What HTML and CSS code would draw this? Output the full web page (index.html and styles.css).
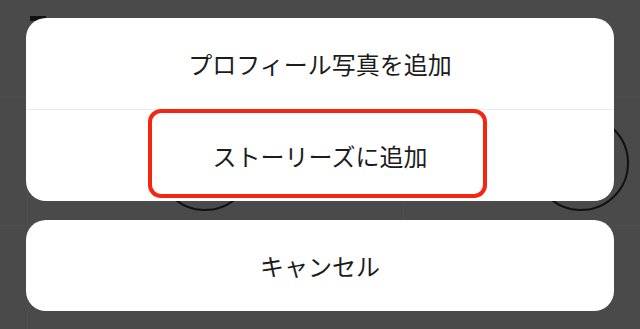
FILE: index.html
```html
<!DOCTYPE html>
<html lang="ja">
<head>
<meta charset="utf-8">
<title>Action sheet</title>
<link rel="stylesheet" href="styles.css">
</head>
<body>
<div class="backdrop" aria-hidden="true">
  <div class="bd-title-mark"></div>
  <div class="bd-title">投稿をシェア</div>
  <div class="bd-line bd-h1"></div>
  <div class="bd-line bd-h2"></div>
  <div class="bd-line bd-v1"></div>
  <div class="bd-line bd-v2"></div>
  <div class="bd-avatar bd-a1"></div>
  <div class="bd-avatar bd-a2"></div>
</div>
<main class="sheet">
  <section class="group">
    <button class="action">プロフィール写真を追加</button>
    <div class="divider"></div>
    <button class="action action-marked">ストーリーズに追加<span class="highlight"></span></button>
  </section>
  <section class="group">
    <button class="action">キャンセル</button>
  </section>
</main>
</body>
</html>
```

FILE: styles.css
```css
* { box-sizing: border-box; }
html, body {
  margin: 0;
  padding: 0;
  width: 640px;
  height: 329px;
  overflow: hidden;
}
body {
  background: #4a4a4a;
  font-family: "Noto Sans CJK JP", "Noto Sans", sans-serif;
  position: relative;
}
.backdrop {
  position: absolute;
  inset: 0;
}
.bd-title-mark {
  position: absolute;
  left: 30px;
  top: 16px;
  width: 16px;
  height: 5px;
  background: #111;
}
.bd-title {
  position: absolute;
  left: 172px;
  top: 13px;
  font-size: 22px;
  color: #222;
  line-height: 30px;
}
.bd-line {
  position: absolute;
  background: #4f4f4f;
}
.bd-h1 { left: 0; right: 0; top: 96px; height: 1px; }
.bd-h2 { left: 0; right: 0; top: 225px; height: 1px; }
.bd-v1 { left: 27px; top: 100px; bottom: 0; width: 1px; }
.bd-v2 { left: 403px; top: 100px; height: 130px; width: 1px; }
.bd-avatar {
  position: absolute;
  width: 96px;
  height: 96px;
  border: 2px solid #111;
  border-radius: 50%;
  top: 115px;
}
.bd-a1 { left: 157px; }
.bd-a2 { left: 533px; }

.sheet {
  position: relative;
  padding: 18px 26px 0 26px;
  display: flex;
  flex-direction: column;
  gap: 19px;
}
.group {
  background: #fff;
  border-radius: 20px;
  display: flex;
  flex-direction: column;
}
.action {
  position: relative;
  display: flex;
  align-items: center;
  justify-content: center;
  height: 91px;
  border: 0;
  background: transparent;
  font-family: inherit;
  font-size: 24px;
  color: #1c1c1c;
  padding: 0;
  letter-spacing: 0;
}
.divider {
  height: 1px;
  background: #ececec;
}
.highlight {
  position: absolute;
  left: 122px;
  top: -1px;
  width: 339px;
  height: 89px;
  border: 4px solid #f5260f;
  border-radius: 13px;
}
```
